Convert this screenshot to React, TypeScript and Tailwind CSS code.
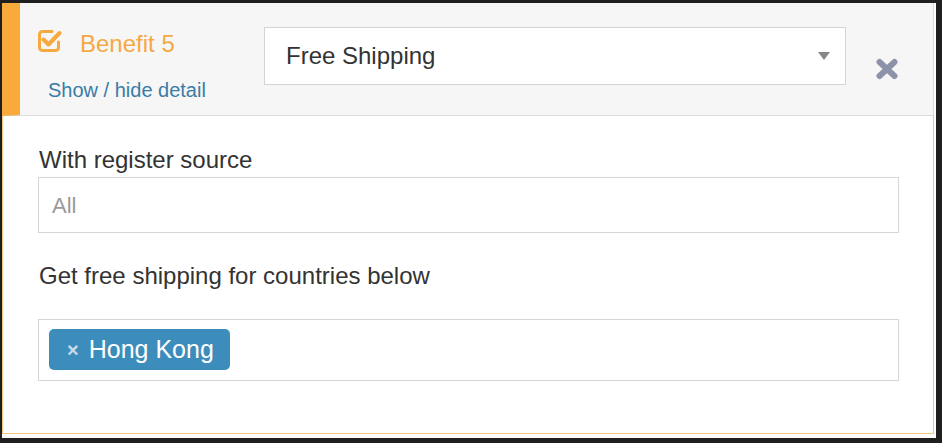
import React from "react";

const font = { fontFamily: '"Liberation Sans", Arial, sans-serif' };

function CheckSquareIcon() {
  return (
    <svg width="25" height="24" viewBox="0 0 25 24" fill="none" aria-hidden>
      <path
        d="M15 2.5H5.5a3 3 0 0 0-3 3v13a3 3 0 0 0 3 3h13a3 3 0 0 0 3-3v-5.5"
        stroke="#f7a93f"
        strokeWidth="3"
        strokeLinecap="round"
      />
      <path
        d="M6.5 10.5l5 5L22.5 4"
        stroke="#f7a93f"
        strokeWidth="4"
        strokeLinecap="round"
        strokeLinejoin="round"
      />
    </svg>
  );
}

function CloseIcon() {
  return (
    <svg width="24" height="22" viewBox="0 0 24 22" aria-hidden>
      <path
        d="M4.5 4L19.5 18M19.5 4L4.5 18"
        stroke="#8e92a8"
        strokeWidth="6"
        strokeLinecap="round"
      />
    </svg>
  );
}

export default function App() {
  return (
    <div className="h-[443px] w-[942px] bg-[#1f1f1f] pl-[2px] pt-[3px]" style={font}>
      <div className="h-[435px] w-[934px] bg-white">
        <div className="w-[932px]">
          {/* Header */}
          <div className="flex h-[113px] border-b border-r border-l-[18px] border-b-[#dcdcdc] border-r-[#dcdcdc] border-l-[#f8ab3b] bg-[#f6f6f6]">
            <div className="w-[244px] shrink-0 pl-[17px] pt-[26px]">
              <div className="flex h-[29px] items-start">
                <CheckSquareIcon />
                <span className="ml-[18px] mt-[1px] text-[24px] leading-[28px] text-[#f5a943]">Benefit 5</span>
              </div>
              <a className="ml-[11px] mt-[21px] block text-[20px] leading-[23px] text-[#3a7ca5]">
                Show / hide detail
              </a>
            </div>
            <div className="mt-[24px] flex h-[58px] w-[582px] items-center justify-between border border-[#d4d4d4] bg-white pl-[21px] pr-[15px]">
              <span className="text-[24px] text-[#333]">Free Shipping</span>
              <span className="h-0 w-0 border-x-[6px] border-t-[8px] border-x-transparent border-t-[#888]" />
            </div>
            <div className="ml-[29px] mt-[55px]">
              <CloseIcon />
            </div>
          </div>

          {/* Body */}
          <div className="h-[318px] border-x border-b border-[#f3c57c] px-[35px] pt-[30px]">
            <div className="pl-[1px] text-[24px] leading-[28px] text-[#333]">With register source</div>
            <div className="mt-[3px] flex h-[56px] w-[861px] items-center border border-[#d6d6d6] pl-[13px] text-[22px] text-[#9a9a9a]">
              All
            </div>
            <div className="mt-[29px] pl-[1px] text-[24px] leading-[28px] text-[#333]">
              Get free shipping for countries below
            </div>
            <div className="mt-[29px] h-[62px] w-[861px] border border-[#d6d6d6] pl-[10px] pt-[9px]">
              <span className="inline-flex h-[41px] items-center rounded-[5px] bg-[#3c8dbc] pl-[18px] pr-[16px]">
                <span className="text-[20px] font-bold leading-none text-[#c9dbe8]">×</span>
                <span className="ml-[10px] text-[25px] leading-none text-white">Hong Kong</span>
              </span>
            </div>
          </div>
        </div>
      </div>
    </div>
  );
}
